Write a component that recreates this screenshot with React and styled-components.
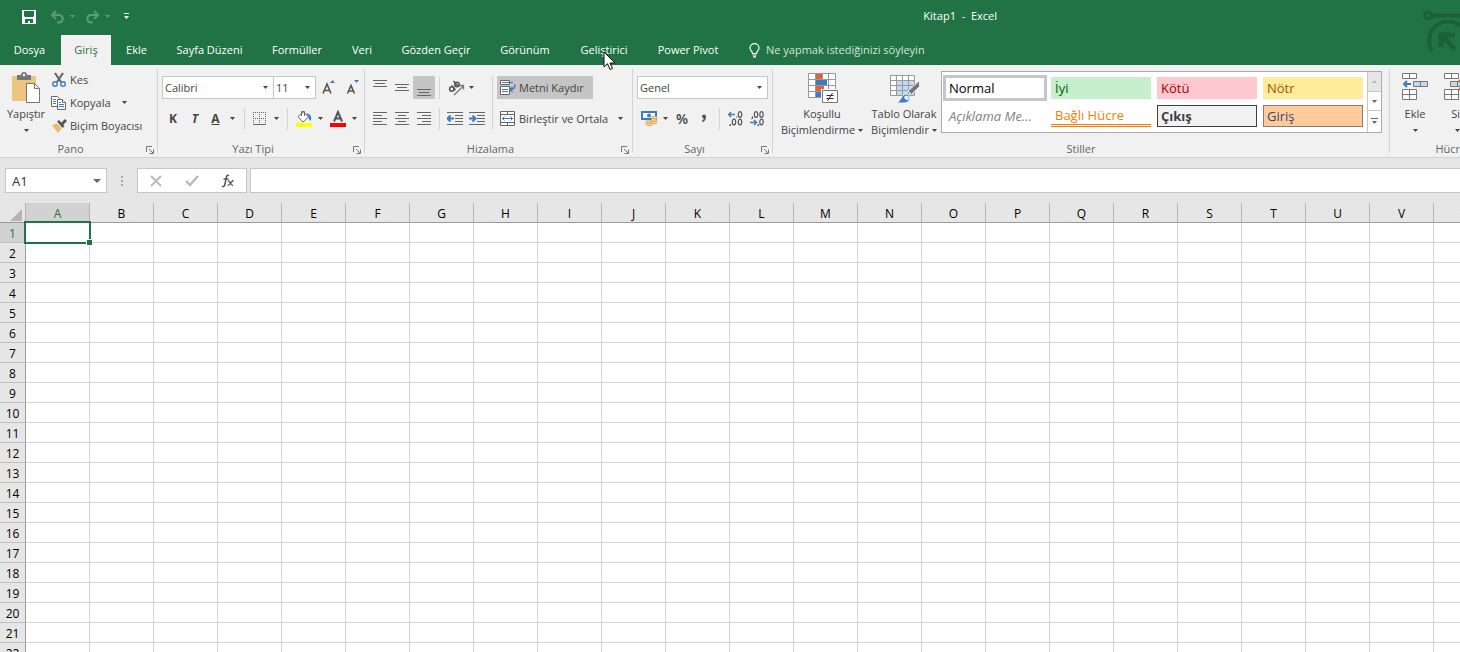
import { useState } from "react";
import styled, { createGlobalStyle, css } from "styled-components";

const COLOR = {
  green: "#217346",
  ribbon: "#f1f1f1",
  chrome: "#e6e6e6",
  line: "#d4d4d4",
  border: "#c6c6c6",
  pressed: "#c5c5c5",
  icon: "#666",
  text: "#444",
  blue: "#3f7cbf",
};

const TABS = [
  { label: "Dosya", width: 59 },
  { label: "Giriş", width: 50 },
  { label: "Ekle", width: 51 },
  { label: "Sayfa Düzeni", width: 95 },
  { label: "Formüller", width: 80 },
  { label: "Veri", width: 50 },
  { label: "Gözden Geçir", width: 98 },
  { label: "Görünüm", width: 80 },
  { label: "Geliştirici", width: 78 },
  { label: "Power Pivot", width: 90 },
];

const STYLES = [
  { label: "Normal", bg: "#fff", color: "#000", selected: true },
  { label: "İyi", bg: "#c6efce", color: "#006100" },
  { label: "Kötü", bg: "#ffc7ce", color: "#9c0006" },
  { label: "Nötr", bg: "#ffeb9c", color: "#9c5700" },
  { label: "Açıklama Me...", bg: "#fff", color: "#7f7f7f", italic: true },
  { label: "Bağlı Hücre", bg: "#fff", color: "#fa7d00", linked: true },
  { label: "Çıkış", bg: "#f2f2f2", color: "#3f3f3f", bold: true, edge: "#3f3f3f" },
  { label: "Giriş", bg: "#ffcc99", color: "#3f3f76", edge: "#7f7f7f" },
];

const COLUMNS = "ABCDEFGHIJKLMNOPQRSTUVWXYZ".split("");
const ROWS = Array.from({ length: 40 }, (_, i) => i + 1);

const GlobalStyle = createGlobalStyle`
  * {
    box-sizing: border-box;
  }

  body {
    margin: 0;
    overflow: hidden;
    font-family: "Open Sans", "Noto Sans", sans-serif;
    font-size: 11px;
    line-height: 16px;
    color: ${COLOR.text};
  }

  button,
  input,
  select {
    margin: 0;
    padding: 0;
    border: 0;
    background: none;
    font: inherit;
    color: inherit;
  }

  svg {
    display: block;
    flex: none;
  }
`;

const Window = styled.div`
  display: flex;
  flex-direction: column;
  height: 100vh;
  overflow: hidden;
  background-color: ${COLOR.chrome};
`;

const Header = styled.header`
  position: relative;
  flex: none;
  background-color: ${COLOR.green};
  color: #fff;

  .emblem {
    position: absolute;
    top: 10px;
    right: 0;
  }

  .pointer {
    position: absolute;
    z-index: 1;
    top: 51px;
    left: 603px;
  }
`;

const TitleBar = styled.div`
  display: grid;
  grid-template-columns: 1fr auto 463px;
  align-items: center;
  height: 35px;
  padding: 0 0 2px 22px;

  .title {
    margin: 0;
    padding-bottom: 2px;
    font-size: 11px;
    font-weight: 400;
    white-space: pre;
  }
`;

const QuickAccess = styled.div`
  display: flex;
  align-items: center;
  gap: 14px;

  .step {
    display: flex;
    align-items: center;
    gap: 5px;
    color: #5c9a78;
  }

  .step + .step {
    margin-left: -4px;
  }
`;

const TabBar = styled.nav`
  display: flex;
  height: 30px;
`;

const Tab = styled.button`
  flex: none;
  width: ${(props) => props.$width}px;
  white-space: nowrap;

  &:first-child {
    margin-right: 2px;
  }

  ${(props) =>
    props.$active &&
    css`
      background-color: ${COLOR.ribbon};
      color: ${COLOR.green};
    `}
`;

const TellMe = styled.label`
  display: flex;
  align-items: center;
  gap: 6px;
  flex: 1;
  padding-left: 16px;

  input {
    width: 240px;
    outline: none;

    &::placeholder {
      color: #d3e3da;
      opacity: 1;
    }
  }
`;

const Ribbon = styled.div`
  display: flex;
  flex: none;
  height: 93px;
  overflow: hidden;
  border-bottom: 1px solid #d2d2d2;
  background-color: ${COLOR.ribbon};
`;

const GroupBox = styled.section`
  position: relative;
  display: flex;
  flex-direction: column;
  justify-content: space-between;
  flex: none;
  width: ${(props) => props.$width}px;
  margin: 4px 0;
  border-right: 1px solid ${COLOR.line};

  .body {
    display: flex;
    padding: 7px 4px 0;
  }

  .caption {
    height: 16px;
    margin: 0 ${(props) => (props.$launcher ? 16 : 0)}px -4px 0;
    text-align: center;
    color: #666;
    white-space: nowrap;
  }

  .launcher {
    position: absolute;
    right: 3px;
    bottom: -1px;
  }
`;

const Stack = styled.div`
  display: flex;
  flex-direction: column;
  gap: 8px;
`;

const Row = styled.div`
  display: flex;
  align-items: center;
  height: 23px;
`;

const Divider = styled.span`
  flex: none;
  width: 1px;
  height: ${(props) => props.$height || 22}px;
  margin: 0 4px;
  background-color: ${COLOR.line};
`;

const ToolButton = styled.button`
  display: flex;
  align-items: center;
  justify-content: ${(props) => (props.$start ? "flex-start" : "center")};
  gap: ${(props) => props.$gap || 5}px;
  flex: none;
  width: ${(props) => props.$width || 22}px;
  height: 23px;
  padding-left: ${(props) => (props.$start ? 3 : 0)}px;
  background-color: ${(props) => (props.$pressed ? COLOR.pressed : "transparent")};
  white-space: nowrap;

  .label {
    flex: 1;
    text-align: left;
  }

  .glyph {
    font-size: 12px;
    font-weight: 700;
  }

  .percent {
    font-size: 14px;
    font-weight: 600;
  }
`;

const BigButton = styled.button`
  display: flex;
  flex-direction: column;
  align-items: center;
  flex: none;
  width: ${(props) => props.$width}px;
  margin-top: -4px;
  white-space: nowrap;

  svg.picture {
    margin-bottom: 2px;
  }

  .line {
    display: flex;
    align-items: center;
    gap: 3px;
    height: 16px;
  }
`;

const ClipboardList = styled.div`
  display: flex;
  flex-direction: column;
  margin-top: -8px;
`;

const ComboBox = styled.label`
  position: relative;
  display: flex;
  align-items: center;
  flex: none;
  width: ${(props) => props.$width}px;
  height: ${(props) => props.$height || 23}px;
  border: 1px solid ${COLOR.border};
  background-color: #fff;

  & + & {
    margin-left: -1px;
  }

  select,
  input {
    width: 100%;
    height: 100%;
    padding-left: ${(props) => props.$inset || 2}px;
    outline: none;
    appearance: none;
    font-size: ${(props) => props.$font || 11}px;
  }

  svg {
    position: absolute;
    right: 5px;
    pointer-events: none;
  }
`;

const Gallery = styled.div`
  display: flex;
  flex: none;
  width: 441px;
  height: 62px;
  margin-top: -5px;
  border: 1px solid #ababab;
  background-color: #fff;

  .swatches {
    display: grid;
    grid-template-columns: repeat(4, 100px);
    grid-auto-rows: 22px;
    gap: 6px;
    flex: 1;
    padding: 5px 3px;
  }

  .scroller {
    display: grid;
    grid-template-rows: 20px 19px 1fr;
    width: 14px;
    border-left: 1px solid ${COLOR.border};
  }
`;

const Swatch = styled.button`
  padding-left: ${(props) => (props.$look.edge ? 3 : 4)}px;
  border: ${(props) => (props.$look.edge ? `1px solid ${props.$look.edge}` : "0")};
  background-color: ${(props) => props.$look.bg};
  color: ${(props) => props.$look.color};
  font-size: 13px;
  font-style: ${(props) => (props.$look.italic ? "italic" : "normal")};
  font-weight: ${(props) => (props.$look.bold ? 700 : 400)};
  line-height: 18px;
  text-align: left;
  white-space: nowrap;

  ${(props) =>
    props.$look.selected &&
    css`
      outline: 3px solid ${COLOR.border};
      outline-offset: -1px;
    `}

  ${(props) =>
    props.$look.linked &&
    css`
      border-bottom: 3px double #fa7d00;
    `}
`;

const ScrollButton = styled.button`
  display: flex;
  align-items: center;
  justify-content: center;
  border-bottom: 1px solid ${COLOR.border};
  color: ${COLOR.icon};

  &:last-child {
    border-bottom: 0;
  }

  &:disabled {
    background-color: ${COLOR.chrome};
    color: #b5b5b5;
  }
`;

const FormulaBar = styled.div`
  display: flex;
  flex: none;
  align-items: center;
  height: 45px;
  padding-left: 5px;
  color: #333;

  .grip {
    margin: 0 13px;
  }

  .actions {
    display: flex;
    align-items: center;
    justify-content: space-between;
    width: 110px;
    height: 25px;
    margin-right: 3px;
    padding: 0 11px;
    border: 1px solid ${COLOR.border};
    background-color: #fff;
  }

  .formula {
    flex: 1;
    height: 25px;
    padding: 0 6px;
    border: 1px solid ${COLOR.border};
    border-right: 0;
    background-color: #fff;
    font-size: 13px;
    outline: none;
  }
`;

const Sheet = styled.div`
  flex: 1;
  min-height: 0;
  overflow: hidden;
  background-color: #fff;
`;

const Grid = styled.table`
  width: 1px;
  table-layout: fixed;
  border-spacing: 0;
  font-size: 12px;
  line-height: 17px;
  color: #000;

  col {
    width: 64px;
  }

  col:first-child {
    width: 26px;
  }

  th,
  td {
    height: 20px;
    padding: 0;
    border-right: 1px solid ${COLOR.line};
    border-bottom: 1px solid ${COLOR.line};
  }

  th {
    padding-top: 2px;
    background-color: ${COLOR.chrome};
    font-weight: 400;
  }

  thead th {
    border-right-color: #b4b4b4;
    border-bottom-color: #9b9b9b;
  }

  tbody th {
    border-right-color: #9b9b9b;
    border-bottom-color: #c0c0c0;
  }

  .corner svg {
    margin: 2px 0 0 10px;
  }
`;

const HeadCell = styled.th`
  && {
    ${(props) =>
      props.$active &&
      css`
        background-color: #d2d2d2;
        color: ${COLOR.green};
      `}
  }
`;

const ActiveCell = styled.td`
  position: relative;

  .frame {
    position: absolute;
    inset: -2px;
    border: 2px solid ${COLOR.green};
  }

  .handle {
    position: absolute;
    right: -4px;
    bottom: -4px;
    width: 7px;
    height: 7px;
    border: 1px solid #fff;
    background-color: ${COLOR.green};
  }
`;

const Caret = ({ up }) => (
  <svg width="5" height="3" viewBox="0 0 5 3" fill="currentColor">
    <path d={up ? "M0 3h5L2.5 0z" : "M0 0h5L2.5 3z"} />
  </svg>
);

const SaveIcon = () => (
  <svg width="14" height="14" viewBox="0 0 14 14" fill="#fff">
    <path fillRule="evenodd" d="M0 0h14v14H0zM2 1v5l1 1h8l1-1V1zM3 9v4h3v-2h2v2h3V9z" />
  </svg>
);

const UndoIcon = ({ flip }) => (
  <svg width="15" height="14" viewBox="0 0 15 14" fill="none" stroke="currentColor" strokeWidth="2">
    <g transform={flip ? "matrix(-1 0 0 1 15 0)" : undefined}>
      <path d="M6 1 2 5l4 4" />
      <path d="M2 5h7.500a3.800 3.800 0 0 1 0 7.500H7" />
    </g>
  </svg>
);

const CustomizeIcon = () => (
  <svg width="5" height="7" viewBox="0 0 5 7" fill="#fff">
    <path d="M0 0h5v1H0zM0 3h5L2.500 6z" />
  </svg>
);

const BulbIcon = () => (
  <svg width="11" height="15" viewBox="0 0 11 15" fill="none" stroke="#fff" strokeWidth="1.200">
    <path d="M3.500 10.500C3.500 8 1 7.500 1 4.900a4.500 4.300 0 0 1 9 0c0 2.600-2.500 3.100-2.500 5.600zM3.500 12h4M4 13.900h3" />
  </svg>
);

const Emblem = () => (
  <svg className="emblem" width="37" height="44" viewBox="0 0 37 44" fill="none" stroke="#1b6039">
    <circle cx="5" cy="5.500" r="3.500" strokeWidth="3" />
    <path d="M9 5.500h28" strokeWidth="4" />
    <path d="M9 41C4 33 6 22 12 17c7-7 18-7 25-1" strokeWidth="4" />
    <path d="M18 37V25h14M20 27l12 12" strokeWidth="5" />
  </svg>
);

const PointerIcon = () => (
  <svg className="pointer" width="13" height="20" viewBox="0 0 13 20">
    <path d="M1 1v15l3.500-3.300L7 18.500l2.500-1L7 12h5z" fill="#fff" stroke="#111" />
  </svg>
);

const LauncherIcon = () => (
  <svg width="8" height="8" viewBox="0 0 8 8" fill="none" stroke="#777">
    <path d="M.500 6V.500H6M3 3l4 4M7.500 3.500v4h-4" />
  </svg>
);

const PasteIcon = () => (
  <svg className="picture" width="30" height="32" viewBox="0 0 30 32">
    <path d="M1 4h24v25H1z" fill="#ecc57e" />
    <path d="M6 3h4a3 3 0 0 1 6 0h4v5H6z" fill="#777" />
    <circle cx="13" cy="3" r="1.200" fill="#fff" />
    <path d="M15.500 11.500h8l5 5v14h-13z" fill="#fff" stroke="#777" />
    <path d="M23.500 11.500v5h5" fill="none" stroke="#777" />
  </svg>
);

const CutIcon = () => (
  <svg width="16" height="16" viewBox="0 0 16 16" fill="none">
    <path d="M4 1l6 9M12 1L6 10" stroke="#666" strokeWidth="2.200" />
    <circle cx="4" cy="12" r="2.300" stroke={COLOR.blue} strokeWidth="1.400" />
    <circle cx="12" cy="12" r="2.300" stroke={COLOR.blue} strokeWidth="1.400" />
  </svg>
);

const CopyIcon = () => (
  <svg width="16" height="16" viewBox="0 0 16 16" fill="#fff" stroke="#666">
    <path d="M.500 1.500h6l2 2v8h-8z" />
    <path d="M2 4.500h3M2 6.500h3M2 8.500h3" stroke={COLOR.blue} />
    <path d="M6.500 4.500h5l3 3v7h-8z" />
    <path d="M11.500 4.500v3h3" />
    <path d="M8 7.500h2M8 9.500h5M8 11.500h5" stroke={COLOR.blue} />
  </svg>
);

const BrushIcon = () => (
  <svg width="16" height="16" viewBox="0 0 16 16">
    <path d="M1 7.500l5-2.500 5 5-4 5z" fill="#ecb96a" />
    <path d="M6 3.500l2-1.500 5.500 6-2 2z" fill="#555" />
    <path d="M10 5l4-4 2 2-4 4z" fill="#555" />
    <path d="M5.500 4.500l6 6" stroke="#f1f1f1" />
  </svg>
);

const GrowFontIcon = ({ shrink }) => (
  <svg width="14" height="16" viewBox="0 0 14 16">
    <path
      d={shrink ? "M1.500 13.500L5 5.500l3.500 8M3 11h4" : "M1 13.500L5 4l4 9.500M2.500 10.500h5"}
      fill="none"
      stroke="#555"
      strokeWidth="1.600"
    />
    <path d={shrink ? "M8 0h5l-2.500 3z" : "M8 3h5l-2.500-3z"} fill={COLOR.blue} />
  </svg>
);

const BorderIcon = () => (
  <svg width="13" height="13" viewBox="0 0 13 13" fill="none" stroke="#666">
    <path d="M0 .500h13M0 6.500h13M.500 0v13M6.500 0v13M12.500 0v13" strokeDasharray="1 1" />
    <path d="M0 12.500h13" />
  </svg>
);

const FillIcon = () => (
  <svg width="16" height="17" viewBox="0 0 16 17" fill="none">
    <path d="M2 6.500L7.500 2l5 5-5.500 5z" fill="#fff" stroke="#666" />
    <path d="M5.500 6V1.500h3V6" stroke="#666" />
    <path d="M10 3.500c4-.5 6 3 5 7-2 0-2.500-2-2.500-4z" fill={COLOR.blue} />
    <path d="M0 13h16v4H0z" fill="#ff0" />
  </svg>
);

const FontColorIcon = () => (
  <svg width="16" height="17" viewBox="0 0 16 17" fill="none">
    <path d="M4 11.500L8 2l4 9.500M5.500 8.500h5" stroke="#555" strokeWidth="2" />
    <path d="M0 13h16v4H0z" fill="#f00" />
  </svg>
);

/* Each number is the length of one line; offset pushes the block down. */
const LinesIcon = ({ lines, align = "center", offset = 0 }) => (
  <svg width="14" height="16" viewBox="0 0 14 16" stroke="#666">
    {lines.map((length, i) => {
      const start = { left: 0, center: (14 - length) / 2, right: 14 - length }[align];
      const y = offset + i * 3 + 0.5;
      return <path key={i} d={`M${start} ${y}h${length}`} />;
    })}
  </svg>
);

const OrientationIcon = () => (
  <svg width="17" height="16" viewBox="0 0 17 16" fill="none" stroke="#555" strokeWidth="1.600">
    <circle cx="3.800" cy="9" r="2.200" />
    <path d="M3.500 5.500l4 4.500M5.500 1l4.500 5" />
    <circle cx="9" cy="4.500" r="2.200" />
    <path d="M6 15l9.500-9M11.500 5.500h4v4" stroke="#777" strokeWidth="1.300" />
  </svg>
);

const IndentIcon = ({ more }) => (
  <svg width="16" height="13" viewBox="0 0 16 13" fill="none" stroke="#666">
    <path d="M0 .500h16M8 3.500h8M8 6.500h8M8 9.500h8M0 12.500h16" />
    <path
      d={more ? "M0 6.500h6M3.500 3.500l3 3-3 3" : "M1 6.500h6M3.500 3.500l-3 3 3 3"}
      stroke={COLOR.blue}
      strokeWidth="2"
    />
  </svg>
);

const WrapIcon = () => (
  <svg width="16" height="16" viewBox="0 0 16 16" fill="none" stroke="#666">
    <path d="M.500.500h9v4h-9zM.500 6.500h9v8h-9z" fill="#fff" />
    <path d="M2 2.500h11" stroke={COLOR.blue} />
    <path d="M2 9.500h6M2 11.500h6" stroke={COLOR.blue} />
    <path d="M14.500 4.500c1 3-1 5-4 5M12.500 7l-2.500 2.500 2.500 2.500" stroke={COLOR.blue} strokeWidth="1.500" />
  </svg>
);

const MergeIcon = () => (
  <svg width="15" height="15" viewBox="0 0 15 15" fill="none" stroke="#666">
    <path d="M.500.500h14v14H.500zM.500 3.500h14M.500 11.500h14M7.500 0v3M7.500 12v3" fill="#fff" />
    <path d="M2 7.500h11M4.500 5.500l-2 2 2 2M10.500 5.500l2 2-2 2" stroke={COLOR.blue} />
  </svg>
);

const CurrencyIcon = () => (
  <svg width="17" height="16" viewBox="0 0 17 16" fill="none">
    <path d="M1 1h14v7H1z" fill="#fff" stroke={COLOR.blue} strokeWidth="2" />
    <circle cx="8" cy="4.500" r="2" fill={COLOR.blue} />
    <g fill="#f7d9a8" stroke="#e0a95a">
      <ellipse cx="13" cy="6.500" rx="3" ry="1.300" />
      <ellipse cx="13" cy="9" rx="3" ry="1.300" />
      <ellipse cx="13" cy="11.500" rx="3" ry="1.300" />
      <ellipse cx="7.500" cy="11" rx="3" ry="1.300" />
      <ellipse cx="8" cy="13.500" rx="3" ry="1.300" />
    </g>
  </svg>
);

const ThousandsIcon = () => (
  <svg width="6" height="9" viewBox="0 0 6 9" fill="none">
    <circle cx="3" cy="2.500" r="2" fill="#555" />
    <path d="M4.300 2.500c0 2.500-1 4-3 5" stroke="#555" strokeWidth="1.500" />
  </svg>
);

const DecimalIcon = ({ less }) => (
  <svg width="15" height="15" viewBox="0 0 15 15" fill="none" stroke="#555" strokeWidth="1.200">
    {(less ? [[6, 3.5], [11.5, 3.5], [11.5, 11]] : [[12, 3.5], [6, 11], [12, 11]]).map(([x, y]) => (
      <ellipse key={`${x}-${y}`} cx={x} cy={y} rx="1.700" ry="2.900" />
    ))}
    <path d={less ? "M2.500 5.500v1.500l-1 1M8.500 13v1l-1 1" : "M8.500 5.500v1M2.500 13v1l-1 1"} />
    <path
      d={less ? "M0 11.500h6M4 9l2.500 2.500L4 14" : "M1 3.500h6M3 1L.700 3.500 3 6"}
      stroke={COLOR.blue}
      strokeWidth="1.500"
    />
  </svg>
);

const ConditionalIcon = () => (
  <svg className="picture" width="32" height="32" viewBox="0 0 32 32" fill="none">
    <path d="M2.500 1.500h27v24h-27z" fill="#fff" />
    <path d="M10 2h6v5h-6zM10 14h8v5h-8z" fill="#e0603a" />
    <path d="M10 8h11v5H10zM10 20h5v5h-5z" fill={COLOR.blue} />
    <path d="M2.500 1.500h27v24h-27zM2.500 7.500h27M2.500 13.500h27M2.500 19.500h27M9.500 1.500v24M16.500 1.500v6M22.500 1.500v24" stroke="#999" />
    <path d="M15 17h17v15H15z" fill={COLOR.ribbon} />
    <path d="M16.500 18.500h15v12h-15z" fill="#fff" stroke="#777" />
    <path d="M20.500 23.500h7M20.500 26.500h7M26.500 21l-5 8" stroke="#333" />
  </svg>
);

const TableIcon = () => (
  <svg className="picture" width="32" height="32" viewBox="0 0 32 32" fill="none">
    <path d="M2.500 3.500h24v20h-24z" fill="#fff" />
    <path d="M9 9h17v14H9z" fill="#c5d9ee" />
    <path d="M2.500 3.500h24v20h-24zM2.500 8.500h24M2.500 13.500h24M2.500 18.500h24M8.500 3.500v20M14.500 3.500v20M20.500 3.500v20" stroke="#999" />
    <path d="M31.500 8.500v6l-8 8-3.500-3.500z" fill="#777" stroke={COLOR.ribbon} />
    <path d="M8 31c5-1 5-9 10.500-9 4.500 0 5 9-2.500 9z" fill={COLOR.blue} stroke={COLOR.ribbon} />
    <path d="M16 26a2.500 2.500 0 1 1 3 2.500z" fill="#e6eef7" />
  </svg>
);

const CellsIcon = ({ remove }) => (
  <svg className="picture" width="28" height="32" viewBox="0 0 28 32" fill="#fff" stroke="#777">
    <path d="M1.500 1.500h14v5h-14zM8.500 1.500v5M1.500 17.500h14v10h-14zM8.500 17.500v10M1.500 22.500h14" />
    <path d={remove ? "M7.500 9.500h14v5h-14zM14.500 9.500v5" : "M12.500 9.500h14v5h-14zM19.500 9.500v5"} fill="#c5d9ee" />
    {remove ? (
      <path d="M16 8l9 10M25 8l-9 10" stroke="#e0603a" strokeWidth="2.500" />
    ) : (
      <path d="M3 12h7M6 9l-3 3 3 3" fill="none" stroke={COLOR.blue} strokeWidth="2" />
    )}
  </svg>
);

const CancelIcon = () => (
  <svg width="14" height="12" viewBox="0 0 14 12" fill="none" stroke="#bbb" strokeWidth="2">
    <path d="M2 1l10 10M12 1L2 11" />
  </svg>
);

const EnterIcon = () => (
  <svg width="14" height="12" viewBox="0 0 14 12" fill="none" stroke="#bbb" strokeWidth="2.500">
    <path d="M1 6l4 4 8-9" />
  </svg>
);

const FunctionIcon = () => (
  <svg width="14" height="14" viewBox="0 0 14 14" fill="none" stroke="#555">
    <path d="M8 1.500C6 .500 5.500 2 5 5L4 10c-.5 2.500-1.500 3-3 2.300M2.500 5h5" strokeWidth="1.500" />
    <path d="M7 6.500c2 0 2.500 5 5 5M12.500 6.500c-2 0-3 5-6 5" strokeWidth="1.300" />
  </svg>
);

const Group = ({ title, width, launcher, children }) => (
  <GroupBox $width={width} $launcher={launcher} aria-label={title}>
    <div className="body">{children}</div>
    <div className="caption">{title}</div>
    {launcher && (
      <button className="launcher" aria-label={`${title} ayarları`}>
        <LauncherIcon />
      </button>
    )}
  </GroupBox>
);

export default function App() {
  const [activeTab, setActiveTab] = useState("Giriş");

  return (
    <Window>
      <GlobalStyle />
      <Header>
        <TitleBar>
          <QuickAccess>
            <button aria-label="Kaydet">
              <SaveIcon />
            </button>
            <button className="step" aria-label="Geri Al">
              <UndoIcon />
              <Caret />
            </button>
            <button className="step" aria-label="Yinele">
              <UndoIcon flip />
              <Caret />
            </button>
            <button aria-label="Özelleştir">
              <CustomizeIcon />
            </button>
          </QuickAccess>
          <h1 className="title">{"Kitap1  -  Excel"}</h1>
        </TitleBar>
        <TabBar>
          {TABS.map(({ label, width }) => (
            <Tab key={label} $width={width} $active={label === activeTab} onClick={() => setActiveTab(label)}>
              {label}
            </Tab>
          ))}
          <TellMe>
            <BulbIcon />
            <input placeholder="Ne yapmak istediğinizi söyleyin" aria-label="Ne yapmak istediğinizi söyleyin" />
          </TellMe>
        </TabBar>
        <Emblem />
        <PointerIcon />
      </Header>

      <Ribbon>
        <Group title="Pano" width={158} launcher>
          <BigButton $width={44}>
            <PasteIcon />
            <span className="line">Yapıştır</span>
            <span className="line">
              <Caret />
            </span>
          </BigButton>
          <ClipboardList>
            <ToolButton $start $gap={3} $width={100}>
              <CutIcon />
              <span className="label">Kes</span>
            </ToolButton>
            <ToolButton $start $gap={3} $width={79}>
              <CopyIcon />
              <span className="label">Kopyala</span>
              <Caret />
            </ToolButton>
            <ToolButton $start $gap={3} $width={100}>
              <BrushIcon />
              <span className="label">Biçim Boyacısı</span>
            </ToolButton>
          </ClipboardList>
        </Group>

        <Group title="Yazı Tipi" width={207} launcher>
          <Stack>
            <Row>
              <ComboBox $width={112}>
                <select aria-label="Yazı tipi">
                  <option>Calibri</option>
                </select>
                <Caret />
              </ComboBox>
              <ComboBox $width={43}>
                <select aria-label="Yazı boyutu">
                  <option>11</option>
                </select>
                <Caret />
              </ComboBox>
              <ToolButton $width={26} aria-label="Büyüt">
                <GrowFontIcon />
              </ToolButton>
              <ToolButton aria-label="Küçült">
                <GrowFontIcon shrink />
              </ToolButton>
            </Row>
            <Row>
              <ToolButton>
                <b className="glyph">K</b>
              </ToolButton>
              <ToolButton>
                <i className="glyph">T</i>
              </ToolButton>
              <ToolButton $width={34} $gap={10}>
                <u className="glyph">A</u>
                <Caret />
              </ToolButton>
              <Divider />
              <ToolButton $width={34} $gap={8} aria-label="Kenarlıklar">
                <BorderIcon />
                <Caret />
              </ToolButton>
              <Divider />
              <ToolButton $width={34} $gap={6} aria-label="Dolgu rengi">
                <FillIcon />
                <Caret />
              </ToolButton>
              <ToolButton $width={34} $gap={6} aria-label="Yazı rengi">
                <FontColorIcon />
                <Caret />
              </ToolButton>
            </Row>
          </Stack>
        </Group>

        <Group title="Hizalama" width={268} launcher>
          <Stack>
            <Row>
              <ToolButton aria-label="Üste hizala">
                <LinesIcon lines={[14, 10, 14]} />
              </ToolButton>
              <ToolButton aria-label="Ortaya hizala">
                <LinesIcon lines={[14, 10, 14]} offset={4} />
              </ToolButton>
              <ToolButton $pressed aria-label="Alta hizala">
                <LinesIcon lines={[14, 10, 14]} offset={9} />
              </ToolButton>
              <Divider />
              <ToolButton $width={34} $gap={4} aria-label="Yönlendirme">
                <OrientationIcon />
                <Caret />
              </ToolButton>
            </Row>
            <Row>
              <ToolButton aria-label="Sola hizala">
                <LinesIcon lines={[14, 9, 14, 9, 14]} align="left" offset={1} />
              </ToolButton>
              <ToolButton aria-label="Ortala">
                <LinesIcon lines={[14, 8, 14, 8, 14]} offset={1} />
              </ToolButton>
              <ToolButton aria-label="Sağa hizala">
                <LinesIcon lines={[14, 9, 14, 9, 14]} align="right" offset={1} />
              </ToolButton>
              <Divider />
              <ToolButton aria-label="Girintiyi azalt">
                <IndentIcon />
              </ToolButton>
              <ToolButton aria-label="Girintiyi artır">
                <IndentIcon more />
              </ToolButton>
            </Row>
          </Stack>
          <Divider $height={54} />
          <Stack>
            <ToolButton $start $pressed $gap={3} $width={96}>
              <WrapIcon />
              <span className="label">Metni Kaydır</span>
            </ToolButton>
            <ToolButton $start $gap={4} $width={126}>
              <MergeIcon />
              <span className="label">Birleştir ve Ortala</span>
              <Caret />
            </ToolButton>
          </Stack>
        </Group>

        <Group title="Sayı" width={140} launcher>
          <Stack>
            <ComboBox $width={131}>
              <select aria-label="Sayı biçimi">
                <option>Genel</option>
              </select>
              <Caret />
            </ComboBox>
            <Row>
              <ToolButton $width={34} aria-label="Finansal biçim">
                <CurrencyIcon />
                <Caret />
              </ToolButton>
              <ToolButton>
                <span className="percent">%</span>
              </ToolButton>
              <ToolButton aria-label="Binlik ayırıcı">
                <ThousandsIcon />
              </ToolButton>
              <Divider />
              <ToolButton aria-label="Ondalık artır">
                <DecimalIcon />
              </ToolButton>
              <ToolButton aria-label="Ondalık azalt">
                <DecimalIcon less />
              </ToolButton>
            </Row>
          </Stack>
        </Group>

        <Group title="Stiller" width={617}>
          <BigButton $width={90}>
            <ConditionalIcon />
            <span className="line">Koşullu</span>
            <span className="line">
              Biçimlendirme <Caret />
            </span>
          </BigButton>
          <BigButton $width={74}>
            <TableIcon />
            <span className="line">Tablo Olarak</span>
            <span className="line">
              Biçimlendir <Caret />
            </span>
          </BigButton>
          <Gallery>
            <div className="swatches">
              {STYLES.map((look) => (
                <Swatch key={look.label} $look={look}>
                  {look.label}
                </Swatch>
              ))}
            </div>
            <div className="scroller">
              <ScrollButton disabled aria-label="Yukarı">
                <Caret up />
              </ScrollButton>
              <ScrollButton aria-label="Aşağı">
                <Caret />
              </ScrollButton>
              <ScrollButton aria-label="Diğer">
                <svg width="7" height="7" viewBox="0 0 7 7" fill="currentColor">
                  <path d="M0 0h7v1H0zM1 3h5L3.500 6z" />
                </svg>
              </ScrollButton>
            </div>
          </Gallery>
        </Group>

        <Group title="Hücreler" width={136}>
          <BigButton $width={42}>
            <CellsIcon />
            <span className="line">Ekle</span>
            <span className="line">
              <Caret />
            </span>
          </BigButton>
          <BigButton $width={42}>
            <CellsIcon remove />
            <span className="line">Sil</span>
            <span className="line">
              <Caret />
            </span>
          </BigButton>
        </Group>
      </Ribbon>

      <FormulaBar>
        <ComboBox $width={102} $height={25} $inset={6} $font={13}>
          <input defaultValue="A1" aria-label="Ad kutusu" />
          <svg width="8" height="4" viewBox="0 0 8 4" fill="#666">
            <path d="M0 0h8L4 4z" />
          </svg>
        </ComboBox>
        <svg className="grip" width="4" height="12" viewBox="0 0 4 12" fill="#aaa">
          <path d="M1 1h2v2H1zM1 5h2v2H1zM1 9h2v2H1z" />
        </svg>
        <div className="actions">
          <button aria-label="İptal">
            <CancelIcon />
          </button>
          <button aria-label="Gir">
            <EnterIcon />
          </button>
          <button aria-label="İşlev Ekle">
            <FunctionIcon />
          </button>
        </div>
        <input className="formula" aria-label="Formül çubuğu" />
      </FormulaBar>

      <Sheet>
        <Grid>
          <colgroup>
            <col />
            {COLUMNS.map((column) => (
              <col key={column} />
            ))}
          </colgroup>
          <thead>
            <tr>
              <th className="corner">
                <svg width="12" height="12" viewBox="0 0 12 12" fill="#b4b4b4">
                  <path d="M12 0v12H0z" />
                </svg>
              </th>
              {COLUMNS.map((column) => (
                <HeadCell key={column} $active={column === "A"}>
                  {column}
                </HeadCell>
              ))}
            </tr>
          </thead>
          <tbody>
            {ROWS.map((row) => (
              <tr key={row}>
                <HeadCell $active={row === 1}>{row}</HeadCell>
                {COLUMNS.map((column) =>
                  row === 1 && column === "A" ? (
                    <ActiveCell key={column}>
                      <div className="frame" />
                      <div className="handle" />
                    </ActiveCell>
                  ) : (
                    <td key={column} />
                  )
                )}
              </tr>
            ))}
          </tbody>
        </Grid>
      </Sheet>
    </Window>
  );
}
